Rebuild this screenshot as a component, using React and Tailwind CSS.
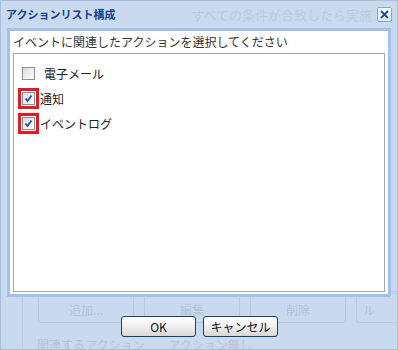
import React from "react";

const font = { fontFamily: '"Noto Sans CJK JP", "Noto Sans", sans-serif' };

const Check = ({ checked }) => (
  <span className="w-[13px] h-[13px] border border-[#8f8f8f] bg-gradient-to-br from-[#dcdcdc] to-[#ffffff] flex items-center justify-center shrink-0">
    {checked && (
      <svg width="9" height="9" viewBox="0 0 9 9">
        <path d="M1.5 4.5 L3.5 7 L7.5 1.5" fill="none" stroke="#2a4fa8" strokeWidth="1.8" />
      </svg>
    )}
  </span>
);

const Item = ({ label, checked, marked }) => (
  <div className="flex items-center h-[25px]">
    {marked ? (
      <span className="w-[21px] h-[21px] border-[3px] border-[#e01b24] flex items-center justify-center ml-[2px]">
        <Check checked={checked} />
      </span>
    ) : (
      <span className="w-[21px] h-[21px] flex items-center justify-center ml-[2px]">
        <Check checked={checked} />
      </span>
    )}
    <span className={`text-[12px] text-[#222] ${marked ? "ml-[1px]" : "ml-[5px]"}`}>{label}</span>
  </div>
);

const Button = ({ children }) => (
  <button className="w-[75px] h-[21px] rounded-[3px] border border-[#1f3f6a] bg-gradient-to-b from-[#ffffff] via-[#f0f0f0] to-[#d6d6d6] text-[12px] text-[#111] flex items-center justify-center">
    {children}
  </button>
);

export default function App() {
  return (
    <div
      className="relative w-[398px] h-[350px] bg-[#c9daee] border border-[#a6bfdf] flex flex-col overflow-hidden"
      style={font}
    >
      {/* faded content under the window */}
      <div className="absolute left-[21px] top-[292px] w-[390px] h-[60px] border-l border-t border-[#bccde3]" />
      <div className="absolute left-[37px] top-[290px] flex gap-[10px] text-[12px] text-[#b2c3da]">
        <span className="w-[96px] h-[32px] border border-[#b9cae0] rounded-[3px] flex items-end justify-center pb-[3px]">追加...</span>
        <span className="w-[96px] h-[32px] border border-[#b9cae0] rounded-[3px] flex items-end justify-center pb-[3px]">編集</span>
        <span className="w-[96px] h-[32px] border border-[#b9cae0] rounded-[3px] flex items-end justify-center pb-[3px]">削除</span>
        <span className="w-[96px] h-[32px] border border-[#b9cae0] rounded-[3px] flex items-end pl-[6px] pb-[3px]">ル</span>
      </div>
      <div className="absolute left-[36px] top-[338px] text-[12px] leading-[12px] text-[#b2c3da] whitespace-nowrap">
        関連するアクション　　アクション無し
      </div>

      <div className="relative h-[27px] flex items-center pl-[5px] pr-[5px]">
        <span className="text-[11px] font-bold text-[#15428b]">アクションリスト構成</span>
        <span className="ml-auto mr-[5px] text-[13px] text-[#bccce1]">すべての条件が合致したら実施</span>
        <span className="w-[15px] h-[15px] rounded-[2px] border border-[#8aa8d2] bg-gradient-to-b from-[#ffffff] to-[#dbe6f4] flex items-center justify-center">
          <svg width="9" height="9" viewBox="0 0 9 9">
            <path d="M1 1 L8 8 M8 1 L1 8" stroke="#1c4c94" strokeWidth="1.8" />
          </svg>
        </span>
      </div>

      <div className="relative mx-[6px] h-[269px] border-[3px] border-[#a3c1ea] bg-white flex flex-col px-[3px]">
        <div className="h-[22px] flex items-center text-[12px] text-[#333]">
          イベントに関連したアクションを選択してください
        </div>
        <div className="h-[239px] border border-[#a9a9a9] flex flex-col pt-[7px] pl-[2px]">
          <Item label="電子メール" />
          <Item label="通知" checked marked />
          <Item label="イベントログ" checked marked />
        </div>
      </div>

      <div className="relative flex justify-center gap-[7px] mt-[19px] pl-[1px]">
        <Button>OK</Button>
        <Button>キャンセル</Button>
      </div>
    </div>
  );
}
